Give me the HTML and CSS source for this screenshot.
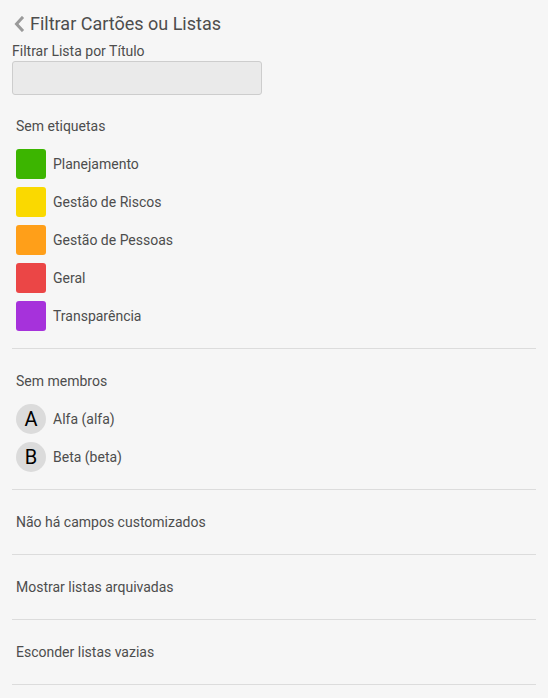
FILE: index.html
```html
<!DOCTYPE html>
<html lang="pt">
<head>
<meta charset="utf-8">
<link rel="stylesheet" href="styles.css">
</head>
<body>
<div class="panel">
  <div class="header">
    <svg class="back" width="12" height="16" viewBox="0 0 12 16"><path d="M9 2 L3.5 8 L9 14" fill="none" stroke="#9a9a9a" stroke-width="3" stroke-linecap="square"/></svg>
    <span class="title">Filtrar Cartões ou Listas</span>
  </div>
  <div class="field">
    <label class="field-label">Filtrar Lista por Título</label>
    <input class="field-input" type="text">
  </div>
  <div class="section first">
    <div class="section-title">Sem etiquetas</div>
    <ul class="items">
      <li class="item"><span class="swatch green"></span><span>Planejamento</span></li>
      <li class="item"><span class="swatch yellow"></span><span>Gestão de Riscos</span></li>
      <li class="item"><span class="swatch orange"></span><span>Gestão de Pessoas</span></li>
      <li class="item"><span class="swatch red"></span><span>Geral</span></li>
      <li class="item"><span class="swatch purple"></span><span>Transparência</span></li>
    </ul>
  </div>
  <hr class="sep">
  <div class="section">
    <div class="section-title">Sem membros</div>
    <ul class="items">
      <li class="item"><span class="avatar">A</span><span>Alfa (alfa)</span></li>
      <li class="item"><span class="avatar">B</span><span>Beta (beta)</span></li>
    </ul>
  </div>
  <hr class="sep">
  <div class="row">Não há campos customizados</div>
  <hr class="sep">
  <div class="row">Mostrar listas arquivadas</div>
  <hr class="sep">
  <div class="row">Esconder listas vazias</div>
  <hr class="sep">
</div>
</body>
</html>
```
FILE: styles.css
```css
html, body {
  margin: 0;
  padding: 0;
  background: #f6f6f6;
}
body {
  font-family: Roboto, "Liberation Sans", sans-serif;
  color: #4d4d4d;
  font-size: 14px;
}
.panel {
  padding: 0 12px;
}
.header {
  display: flex;
  align-items: center;
  gap: 5px;
  height: 22px;
  margin-top: 13px;
  padding-left: 1px;
}
.title {
  font-size: 18px;
  line-height: 22px;
  color: #4d4d4d;
}
.field {
  display: flex;
  flex-direction: column;
  margin-top: 8px;
}
.field-label {
  line-height: 17px;
  font-size: 14px;
  color: #4d4d4d;
}
.field-input {
  box-sizing: border-box;
  width: 250px;
  height: 34px;
  margin: 0;
  margin-top: 1px;
  border: 1px solid #cdcdcd;
  border-radius: 3px;
  background: #eaeaea;
}
.section {
  padding: 0 4px;
  margin-top: 24px;
  margin-bottom: 17px;
}
.section.first {
  margin-top: 23px;
}
.section-title {
  line-height: 17px;
}
.items {
  list-style: none;
  margin: 14px 0 0;
  padding: 0;
  display: flex;
  flex-direction: column;
  gap: 8px;
}
.item {
  display: flex;
  align-items: center;
  gap: 7px;
  height: 30px;
}
.swatch {
  width: 30px;
  height: 30px;
  border-radius: 3px;
}
.green { background: #3cb500; }
.yellow { background: #fad900; }
.orange { background: #ff9f19; }
.red { background: #eb4646; }
.purple { background: #a632db; }
.avatar {
  width: 30px;
  height: 30px;
  border-radius: 50%;
  background: #dbdbdb;
  color: #000;
  font-size: 20px;
  display: flex;
  align-items: center;
  justify-content: center;
}
.sep {
  margin: 0;
  border: 0;
  border-top: 1px solid #dcdcdc;
}
.row {
  padding: 24px 4px 23px;
  line-height: 17px;
}
```
